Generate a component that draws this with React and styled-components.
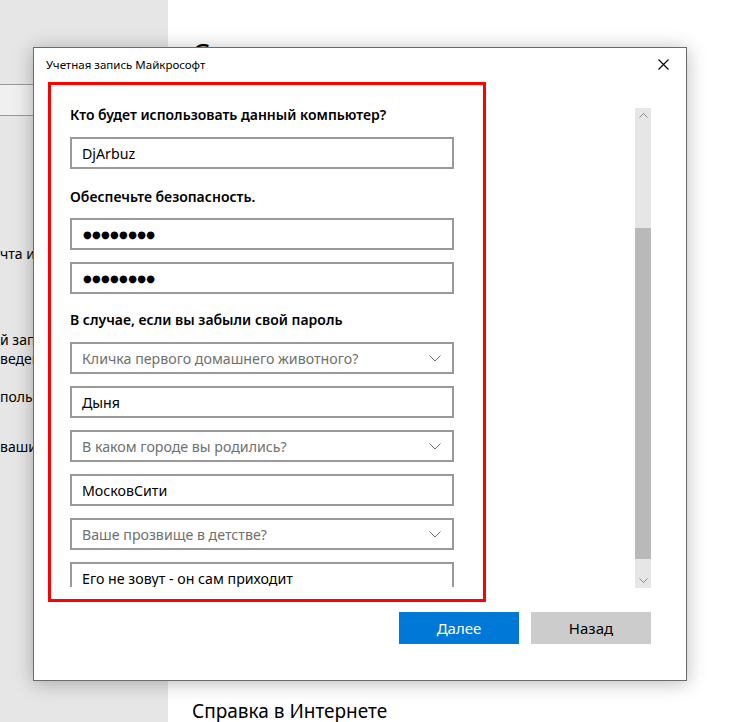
import React from "react";
import styled, { createGlobalStyle } from "styled-components";

const Global = createGlobalStyle`
  html, body { margin: 0; padding: 0; background: #fff; overflow: hidden; }
  body { font-family: "Noto Sans", "Open Sans", sans-serif; color: #000; }
`;

const Page = styled.div`
  position: relative;
  width: 742px;
  height: 722px;
  display: flex;
  overflow: hidden;
`;

const Nav = styled.div`
  width: 168px;
  flex-shrink: 0;
  background: #e6e6e6;
  display: flex;
  flex-direction: column;
  overflow: hidden;
`;

const Search = styled.div`
  margin-top: 84px;
  height: 32px;
  box-sizing: border-box;
  border: 1px solid #999;
  border-left: none;
  background: #f0f0f0;
`;

const NavItem = styled.div`
  margin-top: ${(p) => p.$mt}px;
  font-size: 14px;
  line-height: 19px;
  white-space: nowrap;
`;

const Main = styled.div`
  flex: 1;
  display: flex;
  flex-direction: column;
  padding-left: 24px;
`;

const PageTitle = styled.div`
  margin-top: 36px;
  font-size: 28px;
  line-height: 34px;
  white-space: nowrap;
`;

const Help = styled.div`
  margin-top: auto;
  margin-bottom: -2px;
  font-size: 19px;
  line-height: 26px;
`;

const Dialog = styled.div`
  position: absolute;
  left: 33px;
  top: 47px;
  width: 654px;
  height: 634px;
  box-sizing: border-box;
  border: 1px solid #6b6b6b;
  background: #fff;
  box-shadow: 0 2px 18px rgba(0, 0, 0, 0.28);
  display: flex;
  flex-direction: column;
`;

const TitleBar = styled.div`
  height: 32px;
  display: flex;
  align-items: center;
  justify-content: space-between;
  padding: 0 17px 0 12px;
  font-size: 11.5px;
`;

const CloseIcon = styled.svg`
  width: 11px;
  height: 11px;
  display: block;
`;

const Body = styled.div`
  display: flex;
  padding: 0 35px 0 36px;
  margin-top: 25px;
`;

const Viewport = styled.div`
  width: 384px;
  height: 482px;
  overflow: hidden;
  display: flex;
  flex-direction: column;
`;

const Heading = styled.div`
  font-size: 14px;
  font-weight: 600;
  line-height: 20px;
  margin-top: ${(p) => p.$mt || 0}px;
  margin-bottom: ${(p) => p.$mb}px;
  white-space: nowrap;
`;

const Stack = styled.div`
  display: flex;
  flex-direction: column;
  gap: 12px;
`;

const Field = styled.div`
  height: 32px;
  flex-shrink: 0;
  box-sizing: border-box;
  border: 2px solid #999;
  padding: 0 11px 0 10px;
  display: flex;
  align-items: center;
  justify-content: space-between;
  font-size: 14.2px;
  color: ${(p) => (p.$placeholder ? "#707070" : "#000")};
  white-space: nowrap;
`;

const Dots = styled.span`
  font-family: "DejaVu Sans", sans-serif;
  font-size: 10px;
  letter-spacing: 0.3px;
  padding-left: 1px;
`;

const Chevron = styled.svg`
  width: 12px;
  height: 7px;
  display: block;
`;

const ScrollBar = styled.div`
  margin-left: auto;
  margin-top: 3px;
  width: 16px;
  height: 480px;
  background: #e6e6e6;
  display: flex;
  flex-direction: column;
  align-items: center;
`;

const ScrollArrow = styled.svg`
  width: 9px;
  height: 5px;
  display: block;
  margin: ${(p) => p.$m};
`;

const Thumb = styled.div`
  width: 16px;
  height: 331px;
  background: #b9b9b9;
  margin-top: 110px;
`;

const Buttons = styled.div`
  display: flex;
  justify-content: flex-end;
  gap: 12px;
  padding-right: 35px;
  margin-top: 24px;
`;

const Button = styled.div`
  width: 120px;
  height: 32px;
  display: flex;
  align-items: center;
  justify-content: center;
  font-size: 15px;
  background: ${(p) => (p.$primary ? "#0078d7" : "#cccccc")};
  color: ${(p) => (p.$primary ? "#fff" : "#000")};
`;

const Highlight = styled.div`
  position: absolute;
  left: 14px;
  top: 34px;
  width: 438px;
  height: 520px;
  box-sizing: border-box;
  border: 3px solid #ff0000;
  pointer-events: none;
`;

const DropChevron = () => (
  <Chevron viewBox="0 0 12 7">
    <polyline points="0.5,0.5 6,6 11.5,0.5" fill="none" stroke="#6e6e6e" strokeWidth="1" />
  </Chevron>
);

const Select = ({ children }) => (
  <Field $placeholder>
    <span>{children}</span>
    <DropChevron />
  </Field>
);

export default function App() {
  return (
    <>
      <Global />
      <Page>
        <Nav>
          <Search />
          <NavItem $mt={128}>чта и уче</NavItem>
          <NavItem $mt={67}>й записи<br />ведения</NavItem>
          <NavItem $mt={19}>пользо</NavItem>
          <NavItem $mt={31}>ваших</NavItem>
        </Nav>
        <Main>
          <PageTitle>Семья и другие люди</PageTitle>
          <Help>Справка в Интернете</Help>
        </Main>

        <Dialog>
          <TitleBar>
            <span>Учетная запись Майкрософт</span>
            <CloseIcon viewBox="0 0 11 11">
              <path d="M0.5 0.5 L10.5 10.5 M10.5 0.5 L0.5 10.5" stroke="#000" strokeWidth="1.1" fill="none" />
            </CloseIcon>
          </TitleBar>
          <Body>
            <Viewport>
              <Heading $mb={12}>Кто будет использовать данный компьютер?</Heading>
              <Field>DjArbuz</Field>
              <Heading $mt={18} $mb={11}>Обеспечьте безопасность.</Heading>
              <Stack>
                <Field><Dots>●●●●●●●●</Dots></Field>
                <Field><Dots>●●●●●●●●</Dots></Field>
              </Stack>
              <Heading $mt={16} $mb={12}>В случае, если вы забыли свой пароль</Heading>
              <Stack>
                <Select>Кличка первого домашнего животного?</Select>
                <Field>Дыня</Field>
                <Select>В каком городе вы родились?</Select>
                <Field>МосковСити</Field>
                <Select>Ваше прозвище в детстве?</Select>
                <Field>Его не зовут - он сам приходит</Field>
              </Stack>
            </Viewport>
            <ScrollBar>
              <ScrollArrow viewBox="0 0 9 5" $m="5px 0 0">
                <polyline points="0.5,4.5 4.5,0.5 8.5,4.5" fill="none" stroke="#888" strokeWidth="1" />
              </ScrollArrow>
              <Thumb />
              <ScrollArrow viewBox="0 0 9 5" $m="19px 0 0">
                <polyline points="0.5,0.5 4.5,4.5 8.5,0.5" fill="none" stroke="#888" strokeWidth="1" />
              </ScrollArrow>
            </ScrollBar>
          </Body>
          <Buttons>
            <Button $primary>Далее</Button>
            <Button>Назад</Button>
          </Buttons>
          <Highlight />
        </Dialog>
      </Page>
    </>
  );
}
